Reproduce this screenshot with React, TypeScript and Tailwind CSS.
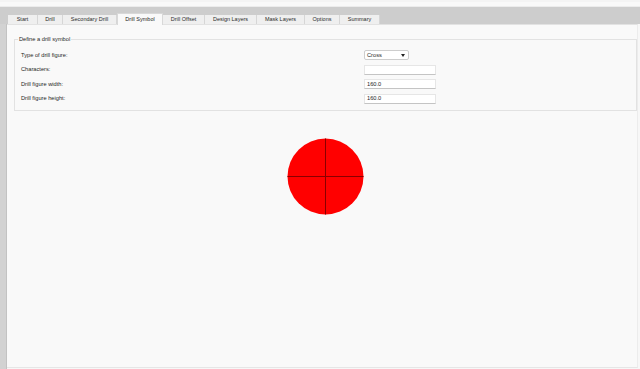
const tabs = [
  { name: "Start", w: "w-[30px]" },
  { name: "Drill", w: "w-[25px]" },
  { name: "Secondary Drill", w: "w-[54px]" },
  { name: "Drill Symbol", w: "w-[46px]", active: true },
  { name: "Drill Offset", w: "w-[42px]" },
  { name: "Design Layers", w: "w-[52px]" },
  { name: "Mask Layers", w: "w-[48px]" },
  { name: "Options", w: "w-[35px]" },
  { name: "Summary", w: "w-[40px]" },
];

function Field({ label, children }: any) {
  return (
    <div className="flex items-center h-[14.5px]">
      <div className="w-[343px] text-[5.7px] text-[#1e1e1e]">{label}</div>
      {children}
    </div>
  );
}

function TextBox({ value }: { value?: string }) {
  return (
    <div className="w-[72px] h-[10px] bg-white border border-[#e6e6e6] border-b-[#c4c4c4] flex items-center pl-[2px] text-[5.7px] text-[#1e1e1e]">
      {value}
    </div>
  );
}

export default function App() {
  return (
    <div
      className="w-[640px] h-[369px] flex flex-col bg-[#f7f7f7] overflow-hidden"
      style={{ fontFamily: '"Liberation Sans", Arial, sans-serif' }}
    >
      <div className="h-[7px] border-t-[2px] border-t-[#f4f4f4] border-b border-b-[#ececec] bg-[#f9f9f9]" />
      <div className="h-[17px] bg-[#cdcdcd] flex items-end pl-[8px]">
        {tabs.map((t) =>
          t.active ? (
            <div
              key={t.name}
              className={`${t.w} h-[12px] mb-[-1px] bg-[#f9f9f9] border border-b-0 border-[#d8d8d8] flex items-center justify-center text-[5.5px] text-[#1e1e1e] relative z-10`}
            >
              {t.name}
            </div>
          ) : (
            <div
              key={t.name}
              className={`${t.w} h-[9px] bg-[#efefef] border-r border-[#d6d6d6] flex items-center justify-center text-[5.5px] text-[#2a2a2a]`}
            >
              {t.name}
            </div>
          )
        )}
      </div>
      <div className="flex-1 flex">
        <div className="w-[7px] bg-[#d2d2d2] border-r border-[#c2c2c2]" />
        <div className="flex-1 bg-[#f9f9f9] border-t border-[#e2e2e2] border-r border-r-[#ececec] border-b border-b-[#e6e6e6] mr-[2px] mb-[1px]">
          <fieldset className="ml-[7px] mt-[11px] h-[75px] border border-[#e2e2e2] pl-[6px] pt-[6px]">
            <legend className="ml-[-3px] px-[1px] text-[5.7px] text-[#1e1e1e] leading-[6px]">
              Define a drill symbol
            </legend>
            <Field label="Type of drill figure:">
              <div className="w-[45px] h-[10px] bg-white border border-[#cdcdcd] rounded-[2px] flex items-center justify-between pl-[2px] pr-[3px] text-[5.7px] text-[#1e1e1e]">
                <span>Cross</span>
                <span className="w-0 h-0 border-l-[2.5px] border-r-[2.5px] border-t-[3px] border-l-transparent border-r-transparent border-t-[#222]" />
              </div>
            </Field>
            <Field label="Characters:">
              <TextBox />
            </Field>
            <Field label="Drill figure width:">
              <TextBox value="160.0" />
            </Field>
            <Field label="Drill figure height:">
              <TextBox value="160.0" />
            </Field>
          </fieldset>
          <div className="pl-[280px] mt-[27px]">
            <svg width="77" height="77" viewBox="0 0 77 77">
              <circle cx="38.5" cy="38.5" r="38" fill="#ff0000" />
              <line x1="38.5" y1="0.5" x2="38.5" y2="76.5" stroke="#8a0000" strokeWidth="1" />
              <line x1="0.5" y1="38.5" x2="76.5" y2="38.5" stroke="#8a0000" strokeWidth="1" />
            </svg>
          </div>
        </div>
      </div>
    </div>
  );
}
